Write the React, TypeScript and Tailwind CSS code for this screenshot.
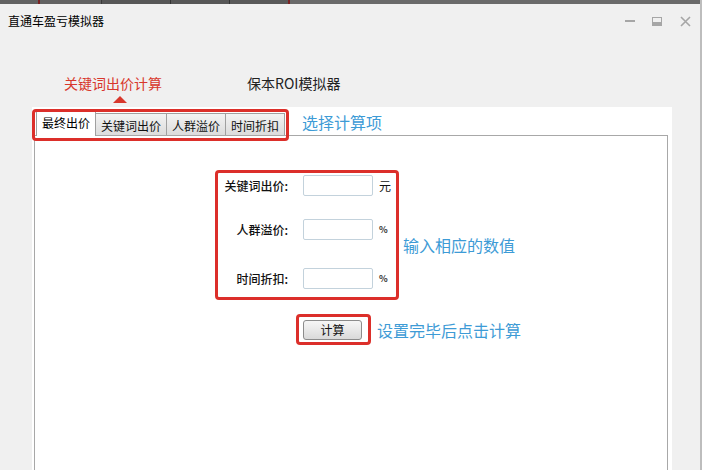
import React from "react";

const tabs = ["最终出价", "关键词出价", "人群溢价", "时间折扣"];

const fields = [
  { label: "关键词出价:", unit: "元", gap: "mt-[2px]" },
  { label: "人群溢价:", unit: "%", gap: "mt-[23px]" },
  { label: "时间折扣:", unit: "%", gap: "mt-[28px]" },
];

const TopStrip: React.FC = () => (
  <div className="flex h-[4px] w-full shrink-0">
    <div className="w-[38px] bg-[#626262]" />
    <div className="w-[2px] bg-[#7a2222]" />
    <div className="w-[61px] bg-[#626262]" />
    <div className="w-[1px] bg-[#3a3a3a]" />
    <div className="w-[68px] bg-[#575757]" />
    <div className="w-[1px] bg-[#333333]" />
    <div className="w-[58px] bg-[#575757]" />
    <div className="w-[1px] bg-[#333333]" />
    <div className="w-[58px] bg-[#595959]" />
    <div className="w-[2px] bg-[#7a2222]" />
    <div className="flex-1 bg-[#6a6a6a]" />
  </div>
);

const TitleBar: React.FC = () => (
  <div className="flex h-[34px] shrink-0 items-center pl-[8px] pr-[9px]">
    <span className="text-[12px] leading-[16px] text-black">直通车盈亏模拟器</span>
    <div className="ml-auto flex items-center">
      {/* minimize */}
      <div className="h-[2px] w-[10px] bg-[#a6a6a6]" />
      {/* maximize */}
      <div className="ml-[17px] flex h-[9px] w-[10px] flex-col justify-end border border-[#a6a6a6]">
        <div className="h-[3px] w-full bg-[#a6a6a6]" />
      </div>
      {/* close */}
      <svg className="ml-[18px]" width="11" height="11" viewBox="0 0 11 11">
        <path d="M1 1 L10 10 M10 1 L1 10" stroke="#a6a6a6" strokeWidth="1.6" />
      </svg>
    </div>
  </div>
);

const ModeHeader: React.FC = () => (
  <div className="flex h-[69px] shrink-0 pl-[64px] pt-[36px]">
    <div className="flex w-[183px] flex-col">
      <span className="text-[14px] leading-[18px] text-[#d8372c]">关键词出价计算</span>
      <div className="ml-[49px] mt-[4px] h-0 w-0 border-x-[7px] border-b-[7px] border-x-transparent border-b-[#d8372c]" />
    </div>
    <span className="text-[14px] leading-[18px] text-[#222222]">保本ROI模拟器</span>
  </div>
);

const TabStrip: React.FC = () => (
  <div className="relative flex items-end">
    {tabs.map((t, i) =>
      i === 0 ? (
        <div
          key={t}
          className="relative z-10 -mb-px flex h-[25px] items-start border-x border-t border-[#a0a0a0] bg-white px-[5px] pt-[4px] text-[12px] leading-[14px] text-black"
        >
          {t}
        </div>
      ) : (
        <div
          key={t}
          className="-ml-px flex h-[22px] items-center border-x border-t border-[#a0a0a0] bg-gradient-to-b from-[#f3f3f3] to-[#dcdcdc] px-[5px] pt-[2px] text-[12px] leading-[14px] text-[#111111]"
        >
          {t}
        </div>
      ),
    )}
    <span className="pointer-events-none absolute -bottom-[6px] -left-[4px] -right-[4px] -top-[2px] z-20 rounded-[4px] border-[3px] border-[#dc2f2a]" />
  </div>
);

const App: React.FC = () => {
  return (
    <div className="flex h-[470px] w-[702px] flex-col overflow-hidden border-r-2 border-[#bdbdbd] bg-[#f0f0f0] font-['Noto_Sans_CJK_SC','Liberation_Sans',sans-serif]">
      <TopStrip />
      <TitleBar />
      <ModeHeader />

      <div className="ml-[32px] flex min-h-0 w-[640px] flex-1 flex-col overflow-hidden bg-white pt-[4px]">
        <div className="flex h-[24px] shrink-0 items-end pl-[4px]">
          <TabStrip />
          <span className="mb-[3px] ml-[17px] text-[16px] leading-[20px] text-[#3d9bd6]">选择计算项</span>
        </div>

        <div className="ml-[2px] h-[340px] w-[634px] shrink-0 border border-[#a8a8a8] bg-white">
          <div className="ml-[180px] mt-[34px] flex items-start">
            <div className="flex w-[184px] flex-col rounded-[4px] border-[3px] border-[#dc2f2a] pb-[8px]">
              {fields.map((f) => (
                <div key={f.label} className={`flex h-[21px] items-center ${f.gap}`}>
                  <span className="w-[70px] text-right text-[12px] font-medium leading-[14px] text-[#111111]">{f.label}</span>
                  <input
                    type="text"
                    className="ml-[15px] h-[21px] w-[70px] rounded-[2px] border border-[#c3d2dc] bg-white outline-none"
                  />
                  <span
                    className={
                      f.unit === "元"
                        ? "ml-[6px] text-[12px] leading-[14px] text-[#111111]"
                        : "ml-[6px] text-[9px] font-bold leading-[12px] text-[#333333]"
                    }
                  >
                    {f.unit}
                  </span>
                </div>
              ))}
            </div>
            <span className="ml-[4px] mt-[65px] text-[16px] leading-[20px] text-[#3d9bd6]">输入相应的数值</span>
          </div>

          <div className="ml-[261px] mt-[14px] flex items-center">
            <div className="flex h-[31px] w-[75px] items-center rounded-[4px] border-[3px] border-[#dc2f2a] pl-[4px]">
              <button className="flex h-[20px] w-[59px] items-center justify-center rounded-[3px] border border-[#8c8c8c] bg-gradient-to-b from-[#f6f6f6] to-[#dadada] text-[12px] leading-[14px] text-[#111111]">
                计算
              </button>
            </div>
            <span className="ml-[6px] text-[16px] leading-[20px] text-[#3d9bd6]">设置完毕后点击计算</span>
          </div>
        </div>
      </div>
    </div>
  );
};

export default App;
